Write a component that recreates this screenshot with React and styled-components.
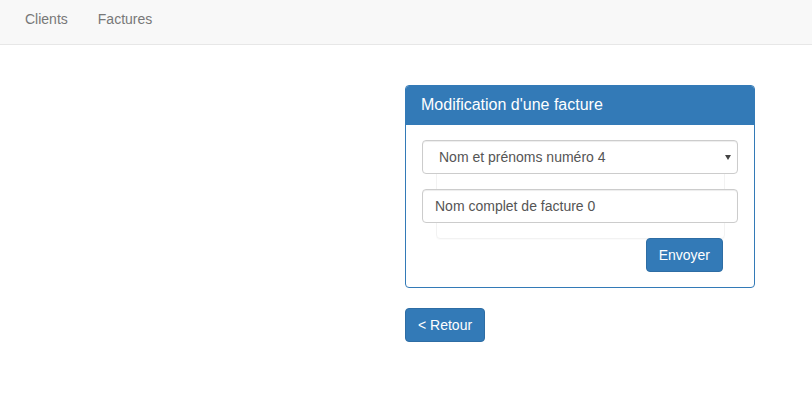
import React from "react";
import styled, { createGlobalStyle } from "styled-components";

const GlobalStyle = createGlobalStyle`
  * {
    box-sizing: border-box;
  }
  body {
    margin: 0;
    font-family: "Liberation Sans", Arial, sans-serif;
    font-size: 14px;
    color: #333;
    background: #fff;
  }
`;

const Navbar = styled.nav`
  display: flex;
  align-items: center;
  height: 45px;
  padding: 0 10px;
  background-color: #f8f8f8;
  border-bottom: 1px solid #e7e7e7;
`;

const NavLink = styled.a`
  padding: 0 15px;
  font-size: 14px;
  line-height: 20px;
  color: #777;
  text-decoration: none;
  margin-top: -6px;
`;

const Main = styled.main`
  padding: 40px 0 0 405px;
`;

const Panel = styled.section`
  width: 350px;
  border: 1px solid #337ab7;
  border-radius: 4px;
  background: #fff;
`;

const PanelHeading = styled.h3`
  margin: 0;
  padding: 9px 15px 10px;
  background-color: #337ab7;
  color: #fff;
  font-size: 16px;
  font-weight: 400;
  line-height: 20px;
  border-radius: 3px 3px 0 0;
`;

const PanelBody = styled.div`
  padding: 15px 16px 15px 16px;
`;

const Form = styled.form`
  display: flex;
  flex-direction: column;
  gap: 15px;
`;

/* faint well peeking out under the two fields */
const Fields = styled.div`
  position: relative;
  display: flex;
  flex-direction: column;
  gap: 15px;

  &::before {
    content: "";
    position: absolute;
    top: 10px;
    left: 14px;
    right: 13px;
    bottom: -16px;
    border: 1px solid #f2f2f2;
    border-radius: 4px;
    box-shadow: 0 1px 1px rgba(0, 0, 0, 0.02);
  }
`;

const SelectWrap = styled.div`
  position: relative;

  &::after {
    content: "";
    position: absolute;
    right: 7px;
    top: 15px;
    border-left: 3px solid transparent;
    border-right: 3px solid transparent;
    border-top: 5px solid #444;
    pointer-events: none;
  }
`;

const Field = styled.input`
  position: relative;
  display: block;
  width: 100%;
  height: 34px;
  padding: 6px 12px;
  font-family: inherit;
  font-size: 14px;
  line-height: 20px;
  color: #555;
  background: #fff;
  border: 1px solid #ccc;
  border-radius: 4px;
  box-shadow: inset 0 1px 1px rgba(0, 0, 0, 0.075);
  outline: none;
`;

const Select = styled(Field).attrs({ as: "select" })`
  appearance: none;
  padding-left: 16px;
`;

const Actions = styled.div`
  position: relative;
  display: flex;
  justify-content: flex-end;
  padding-right: 15px;
`;

const Button = styled.button`
  display: inline-block;
  height: 34px;
  padding: 6px 12px;
  font-family: inherit;
  font-size: 14px;
  line-height: 20px;
  color: #fff;
  background-color: #337ab7;
  border: 1px solid #2e6da4;
  border-radius: 4px;
  cursor: pointer;
`;

const BackRow = styled.div`
  margin-top: 20px;
`;

export default function App() {
  return (
    <>
      <GlobalStyle />
      <Navbar>
        <NavLink href="#">Clients</NavLink>
        <NavLink href="#">Factures</NavLink>
      </Navbar>
      <Main>
        <Panel>
          <PanelHeading>Modification d'une facture</PanelHeading>
          <PanelBody>
            <Form onSubmit={(e) => e.preventDefault()}>
              <Fields>
                <SelectWrap>
                  <Select defaultValue="4">
                    <option value="4">Nom et prénoms numéro 4</option>
                  </Select>
                </SelectWrap>
                <Field type="text" defaultValue="Nom complet de facture 0" />
              </Fields>
              <Actions>
                <Button type="submit">Envoyer</Button>
              </Actions>
            </Form>
          </PanelBody>
        </Panel>
        <BackRow>
          <Button type="button">&lt; Retour</Button>
        </BackRow>
      </Main>
    </>
  );
}
